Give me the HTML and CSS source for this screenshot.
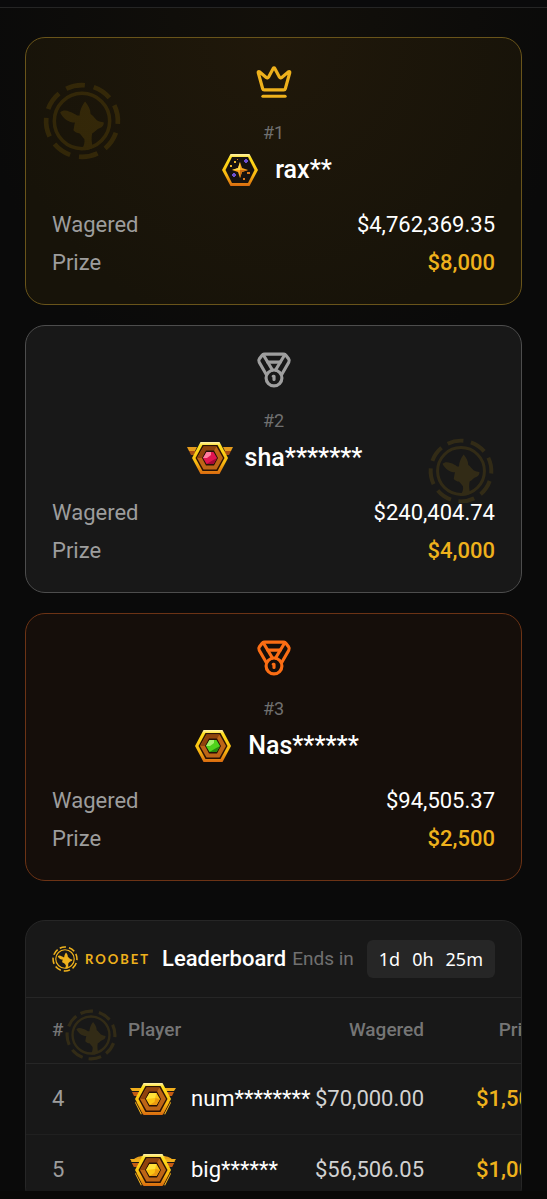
FILE: index.html
```html
<!DOCTYPE html>
<html lang="en">
<head>
  <meta charset="UTF-8">
  <meta name="viewport" content="width=device-width, initial-scale=1.0">
  <title>Roobet Leaderboard</title>
  <link rel="stylesheet" href="styles.css">
</head>
<body>

  <!-- Shared icons -->
  <svg class="sprite" aria-hidden="true">
    <defs>
      <linearGradient id="gold" x1="0" y1="0" x2="0" y2="1">
        <stop offset="0" stop-color="#fff3b0"/>
        <stop offset="0.12" stop-color="#ffdf1c"/>
        <stop offset="0.65" stop-color="#f8b810"/>
        <stop offset="1" stop-color="#d96a10"/>
      </linearGradient>
    </defs>

    <symbol id="coin" viewBox="0 0 100 100">
      <circle cx="50" cy="50" r="46" fill="none" stroke="currentColor" stroke-width="6" stroke-dasharray="24.5 11.63" transform="rotate(-116 50 50)"/>
      <circle cx="50" cy="50" r="35.5" fill="none" stroke="currentColor" stroke-width="4.5"/>
      <path fill="currentColor" d="M22 39c3-3 8-3 12-1 4 1 7 3 10 5l3 0c0-6 3-13 7-18 4 5 7 10 7 16 3 2 5 5 8 8 3 2 6 2 9 3 0 4-2 6-5 7-4 1-6 5-10 7-1 5-1 11 1 18-4 3-9 4-14 3 2-5 4-9 3-14-2-2-4-5-6-7-3 0-6-2-8-4 1-4 1-7 2-10-8 0-15-5-19-13z"/>
    </symbol>

    <symbol id="crown" viewBox="0 0 24 24">
      <path d="M11.562 3.266a.5.5 0 0 1 .876 0L15.39 8.87a1 1 0 0 0 1.516.294L21.183 5.5a.5.5 0 0 1 .798.519l-2.834 10.246a1 1 0 0 1-.956.734H5.81a1 1 0 0 1-.957-.734L2.02 6.02a.5.5 0 0 1 .798-.519l4.276 3.664a1 1 0 0 0 1.516-.294z"/>
      <path d="M5 21h14"/>
    </symbol>

    <symbol id="medal" viewBox="0 0 24 24">
      <path d="M7.21 15 2.66 7.14a2 2 0 0 1 .13-2.2L4.4 2.8A2 2 0 0 1 6 2h12a2 2 0 0 1 1.6.8l1.6 2.14a2 2 0 0 1 .14 2.2L16.79 15"/>
      <path d="M11 12 5.12 2.2"/>
      <path d="m13 12 5.88-9.8"/>
      <path d="M8 7h8"/>
      <circle cx="12" cy="17" r="5"/>
      <path d="M12 18v-2h-.5"/>
    </symbol>

    <symbol id="badge-frame" viewBox="0 0 50 50">
      <path fill="url(#gold)" d="M7 25 15.500 9h19L43 25l-8.500 16h-19z"/>
      <path fill="#2a1205" d="M10.500 25 17.500 12h15l7 13-7 13h-15z"/>
      <path fill="#bd6516" d="M12 25 18.500 13.500h13L38 25l-6.500 11.500h-13z"/>
      <path fill="#8f430c" d="M12 25 18.500 13.500h13L25 25z"/>
      <path fill="#251006" d="M17 25l4-7.500h8l4 7.500-4 7.500h-8z"/>
    </symbol>

    <symbol id="badge-star" viewBox="0 0 50 50">
      <path fill="url(#gold)" d="M7 25 15.500 9h19L43 25l-8.500 16h-19z"/>
      <path fill="#17120f" d="M10.500 25 17 12h16l6.500 13L33 38H17z"/>
      <path fill="#f9a51c" d="M25 17l2 6 6 2-6 2-2 6-2-6-6-2 6-2z"/>
      <path fill="#ffd84b" d="M25 17v8h-8l6-2z"/>
      <path fill="#ca6c12" d="M25 33v-8h8l-6 2z"/>
      <path fill="#6c50d0" d="M29 15h1v-1h2v1h1v2h-1v1h-2v-1h-1zM17 29h1v-1h2v1h1v2h-1v1h-2v-1h-1z"/>
      <path fill="#eab52b" d="M19 16h2v2h-2zM15 20h2v2h-2z"/>
      <path fill="#d9781c" d="M32 27h3v2h-3zM28 33h2v2h-2zM22 14h1v1h-1z"/>
    </symbol>

    <symbol id="badge-ruby" viewBox="0 0 50 50">
      <path fill="#e59b1c" d="M2 14h10l-2 4H4zM48 14H38l2 4h6z"/>
      <path fill="#a94e12" d="M4 18h7l-2 4H6zM46 18h-7l2 4h3z"/>
      <use href="#badge-frame"/>
      <path fill="#e01550" d="M18 25l3.500-6h7l3.500 6-3.500 6h-7z"/>
      <path fill="#ff7fa0" d="M18 25l3.500-6H26v3l-4 3z"/>
      <path fill="#a50738" d="M32 25l-3.500 6h-7l5-3z"/>
    </symbol>

    <symbol id="badge-emerald" viewBox="0 0 50 50">
      <use href="#badge-frame"/>
      <path fill="#4fd21c" d="M18 25l3.500-6h7l3.500 6-3.500 6h-7z"/>
      <path fill="#a4f06c" d="M18 25l3.500-6H26v3l-4 3z"/>
      <path fill="#268a0c" d="M32 25l-3.500 6h-7l5-3z"/>
    </symbol>

    <symbol id="badge-gold" viewBox="0 0 50 50">
      <path fill="#f0ae1c" d="M2 14h11v3H4zM48 14H37l0 3h9z"/>
      <path fill="#c35a13" d="M4 18h8l-2 4H6zM46 18h-8l2 4h4z"/>
      <path fill="none" stroke="#f3b41c" stroke-width="2.500" d="M8 28l6 12M42 28l-6 12"/>
      <use href="#badge-frame"/>
      <path fill="none" stroke="#40200a" d="M7.500 27l7 13.500M42.500 27l-7 13.500"/>
      <path fill="#fbc314" d="M18 25l3.500-6h7l3.500 6-3.500 6h-7z"/>
      <path fill="#ffe23a" d="M18 25l3.500-6h7L27 24z"/>
      <path fill="#eb9a10" d="M32 25l-3.500 6h-7l5-3 1-4z"/>
    </symbol>

    <symbol id="badge-gold-wings" viewBox="0 0 50 50">
      <path fill="#e8a01c" d="M3 17c3-4 8-6 12-6l-2 6zM47 17c-3-4-8-6-12-6l2 6z"/>
      <path fill="#b85412" d="M4 18h8l-2 4H6zM46 18h-8l2 4h4z"/>
      <use href="#badge-gold"/>
    </symbol>
  </svg>

  <header class="topbar"></header>

  <main>
    <!-- Top 3 players -->
    <section class="podium">
      <article class="card first">
        <svg class="watermark"><use href="#coin"/></svg>
        <svg class="rank-icon"><use href="#crown"/></svg>
        <p class="rank">#1</p>
        <h2 class="player"><svg class="badge"><use href="#badge-star"/></svg>rax**</h2>
        <dl class="stats">
          <div><dt>Wagered</dt><dd>$4,762,369.35</dd></div>
          <div><dt>Prize</dt><dd class="prize">$8,000</dd></div>
        </dl>
      </article>

      <article class="card second">
        <svg class="watermark"><use href="#coin"/></svg>
        <svg class="rank-icon"><use href="#medal"/></svg>
        <p class="rank">#2</p>
        <h2 class="player"><svg class="badge"><use href="#badge-ruby"/></svg>sha*******</h2>
        <dl class="stats">
          <div><dt>Wagered</dt><dd>$240,404.74</dd></div>
          <div><dt>Prize</dt><dd class="prize">$4,000</dd></div>
        </dl>
      </article>

      <article class="card third">
        <svg class="rank-icon"><use href="#medal"/></svg>
        <p class="rank">#3</p>
        <h2 class="player"><svg class="badge"><use href="#badge-emerald"/></svg>Nas******</h2>
        <dl class="stats">
          <div><dt>Wagered</dt><dd>$94,505.37</dd></div>
          <div><dt>Prize</dt><dd class="prize">$2,500</dd></div>
        </dl>
      </article>
    </section>

    <!-- Everyone else -->
    <section class="leaderboard">
      <div class="board-header">
        <div class="brand">
          <svg class="brand-coin"><use href="#coin"/></svg>
          <span class="brand-name">ROOBET</span>
          <h2>Leaderboard</h2>
        </div>
        <div class="countdown">
          <span>Ends in</span>
          <div class="timer"><span>1d</span><span>0h</span><span>25m</span></div>
        </div>
      </div>

      <div class="table-wrap">
        <svg class="watermark"><use href="#coin"/></svg>
        <table>
          <thead>
            <tr>
              <th class="col-rank">#</th>
              <th class="col-player">Player</th>
              <th class="col-wagered">Wagered</th>
              <th class="col-prize">Prize</th>
            </tr>
          </thead>
          <tbody>
            <tr>
              <td class="col-rank">4</td>
              <td class="col-player"><div class="entry"><svg class="badge"><use href="#badge-gold"/></svg>num********</div></td>
              <td class="col-wagered">$70,000.00</td>
              <td class="col-prize">$1,500</td>
            </tr>
            <tr>
              <td class="col-rank">5</td>
              <td class="col-player"><div class="entry"><svg class="badge"><use href="#badge-gold-wings"/></svg>big******</div></td>
              <td class="col-wagered">$56,506.05</td>
              <td class="col-prize">$1,000</td>
            </tr>
          </tbody>
        </table>
      </div>
    </section>
  </main>

  <footer class="bottombar"></footer>

</body>
</html>
```
FILE: styles.css
```css
/* Reset and General Styles */
* {
  margin: 0;
  padding: 0;
  box-sizing: border-box;
}

body {
  font-family: Roboto, sans-serif;
  font-size: 22px;
  line-height: 32px;
  color: #fff;
  background: #0a0a0a;
  height: 100vh;
  display: flex;
  flex-direction: column;
}

.sprite {
  position: absolute;
  width: 0;
  height: 0;
}

.topbar {
  flex: none;
  height: 8px;
  background: #0a0a0b;
  border-bottom: 1px solid #252525;
}

.bottombar {
  flex: none;
  height: 8px;
  background: #090807;
}

main {
  flex: 1;
  min-height: 0;
  padding: 29px 25px 0;
  overflow-y: auto;
  scrollbar-width: none;
  background: radial-gradient(ellipse 300px 400px at 50% 0, #13100a, #0a0a0a);
}

/* Podium cards */
.podium {
  display: flex;
  flex-direction: column;
  gap: 20px;
}

.card {
  position: relative;
  display: flex;
  flex-direction: column;
  align-items: center;
  padding: 25px 26px;
  border: 1px solid;
  border-radius: 20px;
}

.first {
  background: radial-gradient(ellipse at 50% 0, #20180a, #171309 80%);
  border-color: #69541a;
}

.second {
  background: #181818;
  border-color: #4d4d4d;
}

.third {
  background: #150e0a;
  border-color: #6c3315;
}

.rank-icon {
  width: 38px;
  height: 38px;
  fill: none;
  stroke: currentColor;
  stroke-width: 2;
  stroke-linecap: round;
  stroke-linejoin: round;
}

.first .rank-icon {
  color: #eeb11c;
}

.second .rank-icon {
  color: #9f9f9f;
}

.third .rank-icon {
  color: #fb6d14;
}

.rank {
  margin-top: 19px;
  font-size: 18px;
  line-height: 25px;
  color: #707070;
}

.badge {
  flex: none;
  width: 50px;
  height: 50px;
}

.player {
  display: flex;
  align-items: center;
  gap: 10px;
  font-size: 25px;
  font-weight: 500;
}

.stats {
  position: relative;
  align-self: stretch;
  display: flex;
  flex-direction: column;
  gap: 6px;
  margin-top: 14px;
}

.stats div {
  display: flex;
  justify-content: space-between;
}

.stats dt {
  color: #9d9d9d;
}

.stats .prize {
  font-weight: 500;
  color: #eeb11c;
}

/* Faded coins behind the content */
.watermark {
  position: absolute;
  color: #eab308;
  opacity: 0.12;
}

.first .watermark {
  top: 44px;
  left: 17px;
  width: 78px;
  height: 78px;
}

.second .watermark {
  right: 27px;
  bottom: 88px;
  width: 66px;
  height: 66px;
}

.table-wrap .watermark {
  top: 11px;
  left: 39px;
  width: 52px;
  height: 52px;
}

/* Leaderboard */
.leaderboard {
  margin-top: 39px;
  background: #181818;
  border: 1px solid #262626;
  border-radius: 20px;
  overflow: hidden;
}

.board-header {
  display: flex;
  justify-content: space-between;
  align-items: center;
  padding: 19px 26px;
  border-bottom: 1px solid #262626;
}

.brand,
.countdown {
  display: flex;
  align-items: center;
  white-space: nowrap;
}

.brand-coin {
  width: 26px;
  height: 26px;
  margin-right: 7px;
  color: #eeb11c;
}

.brand-name {
  font-family: Lato, sans-serif;
  font-size: 13px;
  font-weight: 700;
  letter-spacing: 2px;
  color: #eeb11c;
}

.brand h2 {
  margin-left: 12px;
  font-size: 22px;
  font-weight: 500;
}

.countdown {
  gap: 13px;
  font-size: 19px;
  color: #707070;
}

.timer {
  display: flex;
  gap: 12px;
  padding: 3px 12px;
  font-family: "Noto Sans", sans-serif;
  font-size: 18px;
  color: #fff;
  background: #262626;
  border-radius: 6px;
}

.table-wrap {
  position: relative;
  overflow: hidden;
}

table {
  position: relative;
  width: 100%;
  min-width: 542px;
  table-layout: fixed;
  border-collapse: collapse;
}

th,
td {
  padding: 0 26px;
  text-align: left;
  white-space: nowrap;
}

th {
  height: 65px;
  font-size: 19px;
  font-weight: 500;
  color: #757575;
}

td {
  height: 71px;
}

tr {
  border-bottom: 1px solid #202020;
}

thead tr {
  border-bottom-color: #262626;
}

.col-rank {
  width: 76px;
}

.col-player {
  width: 186px;
}

.col-wagered {
  width: 162px;
  text-align: right;
}

.col-prize {
  text-align: right;
}

td.col-rank {
  color: #9d9d9d;
}

td.col-wagered {
  color: #d2d2d2;
}

td.col-prize {
  font-weight: 500;
  color: #eeb11c;
}

.entry {
  display: flex;
  align-items: center;
  gap: 13px;
}
```
